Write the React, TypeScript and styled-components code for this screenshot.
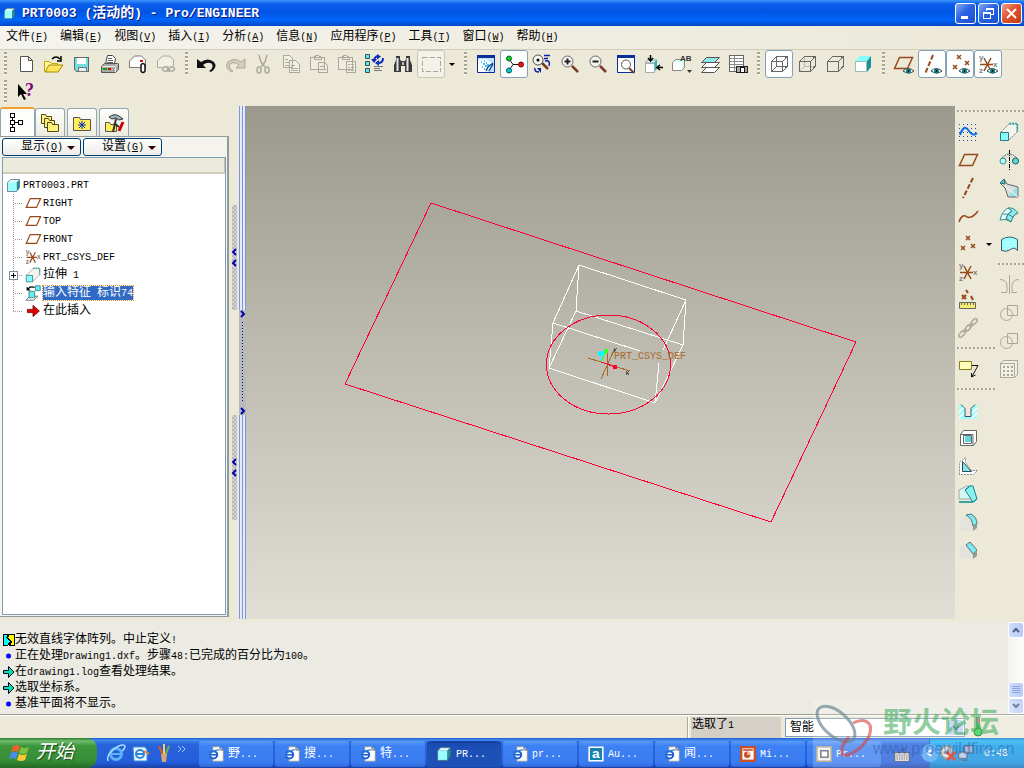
import React from 'react';
import styled, { createGlobalStyle, css } from 'styled-components';

const Global = createGlobalStyle`
  * { box-sizing: border-box; }
  body {
    margin: 0;
    background: #ece9d8;
    color: #000;
    font-family: 'Liberation Mono', 'Noto Sans CJK SC', monospace;
    font-size: 12px;
    line-height: 16px;
  }
  button, select { font: inherit; color: inherit; margin: 0; padding: 0; border: 0; background: none; }
  ul { list-style: none; margin: 0; padding: 0; }
`;

/* ---------- text ---------- */

const Latin = styled.span<{ $size: number }>`
  font-size: ${(p) => p.$size}px;
`;

/* Latin letters take half the width of a Han character. */
const Txt = ({ children, size = 10 }: { children: string; size?: number }) => (
  <>
    {children.split(/([\x20-\x7e]+)/).map((part, i) =>
      i % 2 ? <Latin key={i} $size={size}>{part}</Latin> : part,
    )}
  </>
);

/* ---------- icons ---------- */

const Svg = styled.svg<{ $w?: number; $h?: number; $smooth?: boolean }>`
  display: block;
  flex: none;
  width: ${(p) => p.$w ?? 20}px;
  height: ${(p) => p.$h ?? 20}px;
  overflow: visible;
  fill: none;
  stroke: none;
  shape-rendering: ${(p) => (p.$smooth ? 'auto' : 'crispEdges')};
`;
const Glyph = styled.text<{ $size: number; $serif?: boolean }>`
  font: bold ${(p) => p.$size}px ${(p) => (p.$serif ? "'Liberation Serif', serif" : "'Liberation Sans', sans-serif")};
`;

const BR = '#964a1c';
const GY = '#aca899';
const plane = 'M6.500 4.500h13l-5 11h-13z';
const star = (x: number, y: number) => `M${x} ${y}l4 4M${x + 4} ${y}l-4 4`;

const Eye = () => (
  <g>
    <path d="M9 17q5-5 11 0-5 4-11 0z" fill="#fff" stroke="#444" />
    <circle cx="14.500" cy="17" r="2.500" fill="#007c80" />
    <path d="M14 16h1v2h-1z" fill="#012" />
  </g>
);
const Cube = ({ hidden, inner }: { hidden?: boolean; inner?: string }) => (
  <g stroke="#666">
    {!hidden && <path d="M2.500 17.500l5-5h10M7.500 12V2.500" stroke={inner} />}
    <path d="M2.500 7.500h11v10h-11zM2.500 7.500l5-5h10.500l-4.500 5M18 2.500v10l-4.500 5" />
  </g>
);
const Lens = ({ sign }: { sign: string }) => (
  <g>
    <path d="M12 12l6 6" stroke="#7d3a24" strokeWidth="2.500" />
    <circle cx="7.500" cy="7.500" r="5.500" fill="#f4f3ee" stroke="#666" />
    <path d={sign} stroke="#222" strokeWidth="2" />
  </g>
);
const Csys = () => (
  <g>
    <path d="M2 10.500h13M6 4l7 13M13 4L6 17" stroke={BR} strokeWidth="1.500" />
    <Glyph $size={8} x="1" y="6" fill="#808080">y</Glyph>
    <Glyph $size={8} x="1" y="19" fill="#808080">z</Glyph>
    <Glyph $size={8} x="15" y="13" fill="#808080">x</Glyph>
  </g>
);
const SolidCube = () => (
  <g>
    <path d="M2 6l4-4h12l-4 4z" fill="#d8ffff" />
    <path d="M14 6l4-4v11l-4 5z" fill="#1f8f94" />
    <path d="M2 6h12v12H2z" fill="#9ff" />
    <path d="M2 6L6 2h12v11l-4 5H2z" stroke="#567" />
  </g>
);
const Page = () => (
  <g>
    <path d="M6 1h9l4 4v14H6z" fill="#fff" stroke="#999" />
    <path d="M15 1v4h4" stroke="#444" />
    <circle cx="7" cy="11" r="4.500" fill="#fff" stroke="#1e5fd0" strokeWidth="2.500" />
    <path d="M3 11h9" stroke="#1e5fd0" strokeWidth="2" />
    <path d="M1 16Q1 10 6 7t8-2" stroke="#2d7de0" strokeWidth="1.500" />
  </g>
);

const icons: Record<string, React.ReactNode> = {
  fresh: <path d="M4.500 2.500h8l4 4v11h-12z M12.500 2.500v4h4" fill="#fff" stroke="#555" />,
  open: (
    <g>
      <path d="M.5 17.500v-10h5l2 2h6v3" fill="#fff7a0" stroke="#c9a800" />
      <path d="M1 18l4-7h14l-5 7z" fill="#ffe45c" stroke="#a58a00" />
      <path d="M8 5q4-4 8 0M17 2v5h-4" stroke="#000" strokeWidth="1.500" />
    </g>
  ),
  save: (
    <g>
      <path d="M2.500 3.500h14v14h-12l-2-2z" fill="#6fdfe0" stroke="#666" />
      <path d="M5 4h9v6H5z" fill="#fff" />
      <path d="M6 13h8v4H6z" fill="#eee" stroke="#777" />
    </g>
  ),
  print: (
    <g>
      <path d="M5.500 10l2-8.500h5l3 3-1 6" fill="#fff" stroke="#444" />
      <path d="M8 4.500h4M8 6.500h5M7 8.500h6" stroke="#666" />
      <path d="M1.500 12.500l3-3h14v6l-3 3h-14z" fill="#a8a8a4" stroke="#555" />
      <path d="M2 12.500h13l3-3M15.500 13v5" stroke="#eee" />
      <path d="M3 14h4v2H3z" fill="#0a0" />
      <path d="M8 14h3v2H8z" fill="#d00" />
    </g>
  ),
  mail: (
    <g>
      <path d="M1.500 13.500V7l5-5h7l4 4v7.500z" fill="#fff" stroke="#777" />
      <path d="M12 6h3v2h-3z" fill="#e01000" />
      <path d="M13 16v-5q2-3 4 0v6q-2 3-4 0z" fill="#fff" stroke="#111" strokeWidth="1.500" />
    </g>
  ),
  mailOff: (
    <g stroke={GY}>
      <path d="M6 13.500H1.500V7l5-5h7l4 4v6" fill="#f2efe3" />
      <path d="M8 13h4q3 2 0 4H8q-3-2 0-4zM14 13h3q3 2 0 4h-4q-2-1-1-3" strokeWidth="1.500" />
    </g>
  ),
  undo: <path d="M0 5v9h9l-3-3q5-4 9-1 2 4-3 7l2 1q7-5 3-10-6-5-13 0z" fill="#111" />,
  redo: <path d="M20 5v9h-9l3-3q-5-4-9-1-2 4 3 7l-2 1q-7-5-3-10 6-5 13 0z" fill="#d3cfc0" stroke={GY} />,
  cut: (
    <g stroke={GY} strokeWidth="1.500">
      <path d="M6 1l2 7 4 5M14 1l-2 7-4 5" />
      <ellipse cx="6" cy="16" rx="2" ry="3" />
      <ellipse cx="14" cy="16" rx="2" ry="3" />
    </g>
  ),
  copy: <path d="M2.500 1.500h6l3 3v9h-9zM8.500 6.500h6l4 4v8h-10zM4 5h3M4 8h4M4 11h4M10 11h4M10 14h7M10 16h7" fill="#f2efe3" stroke={GY} />,
  paste: <path d="M1.500 3.500h14v12h-14zM5 3l3-2 4 2v2H5zM9.500 8.500h6l3 3v7h-9zM11 12h4M11 15h6" fill="#efecdf" stroke={GY} />,
  pasteSpecial: <path d="M1.500 3.500h14v12h-14zM5 3l3-2 4 2v2H5zM9.500 7.500h9v11h-9zM11 10h2M11 13h2M11 16h2M14 10h3M14 13h3M14 16h3" fill="#efecdf" stroke={GY} />,
  regen: (
    <g>
      <path d="M.5.500h4v4h-4zM.5 7.500h4v4h-4zM.5 14.500h4v4h-4z" fill="#5ee" stroke="#355" />
      <path d="M9 6q1-4 5-4M18 4q0 5-5 5" stroke="#0a2fb5" strokeWidth="2" />
      <path d="M12 0l4 2.500-4 3zM14 6l-4 3 4 3zM6 5h6l-3 4z" fill="#0a2fb5" />
      <path d="M9 12.500h9M9 14.500h6M9 16.500h8" stroke="#777" />
    </g>
  ),
  find: (
    <g>
      <path d="M3 2h4v3l1 2h4l1-2V2h4v4l2 5v7h-7v-6H8v6H1v-7l2-5z" fill="#3a3a3a" />
      <path d="M4.500 4v13M14.500 4v13" stroke="#e4e4e4" strokeWidth="2" />
      <path d="M9 8h2v3H9z" fill="#bbb" />
    </g>
  ),
  marquee: <path d="M1.500 3.500h18v14h-18z" stroke={GY} strokeDasharray="5 2" />,
  repaint: (
    <g>
      <path d="M1.500 1.500h17v17h-17z" fill="#bfe6fb" stroke="#0b2f9a" />
      <path d="M1 1h18v3H1z" fill="#0b2f9a" />
      <path d="M2 18V6l8-1 7 5-6 8z" fill="#fff" />
      <path d="M10 17l2-4 5-4M13 17l4-7" stroke="#134a8c" strokeWidth="1.500" />
      <path d="M5 8h1M8 7h1M7 10h2M10 9h1M9 12h2M6 13h1M11 11h2M8 15h1" stroke="#0af" strokeWidth="1.500" />
    </g>
  ),
  spin: (
    <g>
      <path d="M5 5l4 5.500h8M9 10.500l-4 6" stroke="#111" />
      <circle cx="5" cy="4.500" r="2.500" fill="#14c814" stroke="#063" />
      <circle cx="17" cy="10.500" r="2.500" fill="#e11" stroke="#700" />
      <circle cx="5" cy="16.500" r="2.500" fill="#0cc" stroke="#055" />
    </g>
  ),
  orient: (
    <g>
      <path d="M10 9l6 6" stroke="#7d3a24" strokeWidth="2.500" />
      <circle cx="6" cy="6" r="5" fill="#f4f3ee" stroke="#555" />
      <circle cx="6" cy="6" r="1.500" fill="#000" />
      <path d="M12 1.500h6M12 4.500h4M13 7q6-1 4 5M3 14q-1 4 4 4" stroke="#0a23a5" strokeWidth="1.500" />
      <path d="M5 14h4v5z" fill="#0a23a5" />
    </g>
  ),
  zoomIn: <Lens sign="M4.500 7.500h6M7.500 4.500v6" />,
  zoomOut: <Lens sign="M4.500 7.500h6" />,
  refit: (
    <g>
      <path d="M1.500 1.500h17v17h-17z" fill="#fff" stroke="#0b2f9a" />
      <path d="M1 1h18v3H1z" fill="#0b2f9a" />
      <path d="M13 14l5 5" stroke="#7d3a24" strokeWidth="2" />
      <circle cx="10" cy="10.500" r="4.500" fill="#fff" stroke="#555" />
    </g>
  ),
  reorient: (
    <g>
      <path d="M1 9l3-3h9l-3 3z" fill="#dff" stroke="#899" />
      <path d="M10 9l3-3v9l-3 3z" fill="#2bb" />
      <path d="M1.500 9.500h9v9h-9z" fill="#fff" stroke="#aaa" />
      <path d="M6.500 1v5M4 4l2.500 3L9 4M19 13.500h-6M16 11l-3 2.500 3 2.500" stroke="#000" strokeWidth="1.500" />
    </g>
  ),
  views: (
    <g>
      <path d="M.5 8.500l3-3h9v8l-3 3h-9z" fill="#cfe" stroke="#888" />
      <path d="M1 8h9v8H1z" fill="#fff" />
      <Glyph $size={8} x="8" y="7" fill="#333">AB</Glyph>
      <path d="M15 16h5l-2.500 3z" fill="#333" />
    </g>
  ),
  layers: (
    <g stroke="#555">
      <path d="M1.500 18.500l5-5h13l-5 5zM1.500 13.500l5-5h13l-5 5z" fill="#fff" />
      <path d="M1.500 8.500l5-5h13l-5 5z" fill="#8fe9ea" />
    </g>
  ),
  camera: (
    <g>
      <path d="M1.500 1.500h14v16h-14z" fill="#fff" stroke="#666" />
      <path d="M2 4.500h13M2 7.500h13M2 10.500h13M2 13.500h13M6.500 2v15" stroke="#888" />
      <path d="M8.500 12.500h11v6h-11z" fill="#aaa" stroke="#222" />
      <path d="M12 13h4v5h-4z" fill="#fff" stroke="#111" />
    </g>
  ),
  wire: <Cube />,
  hiddenLine: <Cube inner="#b8b8b8" />,
  noHidden: <Cube hidden />,
  shaded: (
    <g>
      <path d="M2 7l5-5h11l-4 5z" fill="#8ff" />
      <path d="M14 7l4-5v11l-4 5z" fill="#1c9096" />
      <path d="M2.500 7.500h11v10h-11z" fill="#fff" stroke="#9bb" />
    </g>
  ),
  planeEye: <g><path d="M5.500 3.500h13l-5 11h-13z" stroke={BR} strokeWidth="1.500" /><Eye /></g>,
  axisEye: <g><path d="M11 1L3 20" stroke={BR} strokeWidth="2" strokeDasharray="5 2" /><Eye /></g>,
  pointEye: <g><path d={star(7, 1) + star(3, 11) + star(15, 7)} stroke={BR} strokeWidth="1.500" /><Eye /></g>,
  csysEye: <g><Csys /><Eye /></g>,
  help: (
    <g>
      <path d="M2 2v13l3-3 3 6 2-1-3-5h4z" fill="#000" />
      <Glyph $size={18} $serif x="9" y="14" fill="#800080">?</Glyph>
    </g>
  ),
  sketch: (
    <g>
      <path d="M1 2.500h18M1 6.500h18M1 10.500h18M1 14.500h18M1 18.500h18" stroke="#224c9c" strokeDasharray="1 3" />
      <path d="M2 13q4-12 9-4 4 6 8 2" stroke="#0a6cf0" strokeWidth="2" />
    </g>
  ),
  plane: <path d={plane} stroke={BR} strokeWidth="1.500" />,
  axis: <path d="M15 0L5 20" stroke={BR} strokeWidth="2" strokeDasharray="5 2" />,
  curve: <path d="M1 16q3-9 8-5 5 2 11-6" stroke={BR} strokeWidth="1.500" />,
  points: <path d={star(8, 2) + star(3, 12) + star(13, 10)} stroke={BR} strokeWidth="1.500" />,
  csys: <Csys />,
  measure: (
    <g>
      <path d={star(4, 5) + 'M8 0l2 3M13 6l2 4'} stroke={BR} strokeWidth="2" />
      <path d="M1.500 12.500h16v6h-16z" fill="#f4ee70" stroke="#666" />
      <path d="M3 14h14" stroke="#666" strokeDasharray="1 2" strokeWidth="2" />
    </g>
  ),
  chain: (
    <g stroke={GY} strokeWidth="1.500">
      <ellipse cx="4" cy="16" rx="4" ry="2" transform="rotate(-48 4 16)" />
      <ellipse cx="10" cy="10" rx="4" ry="2" transform="rotate(-48 10 10)" />
      <ellipse cx="16" cy="4" rx="4" ry="2" transform="rotate(-48 16 4)" />
      <path d="M5 14l4-3M11 9l4-4" />
    </g>
  ),
  note: (
    <g>
      <path d="M1.500 2.500h12v8h-12z" fill="#ffb" stroke="#8c7d1c" />
      <path d="M14 6.500h6l-6 11M13.500 14v4l4-2" stroke="#111" />
    </g>
  ),
  hole: (
    <g>
      <path d="M1 5h3l3 3v9h6V8l3-3h3v14H1z" fill="#9ff" />
      <path d="M1 12l5-5M1 18l6-6M13 14l6-6M13 19l6-6" stroke="#fff" strokeWidth="1.500" />
      <path d="M3 4.500l4 4v8h6v-8l4-4" stroke="#456" />
    </g>
  ),
  shell: (
    <g>
      <path d="M2.500 6.500l3-4h13v11l-3 4h-13z" fill="#fff" stroke="#666" />
      <path d="M5.500 7.500h8v8h-8zM2 6.500h13v11" fill="#fff" stroke="#666" />
      <path d="M7 8h6v6H7z" fill="#5ed7dc" />
    </g>
  ),
  rib: (
    <g>
      <path d="M1.500 18.500v-12l6-5v5l6 8h6l-4 4z" fill="#fff" stroke="#888" strokeDasharray="2 1" />
      <path d="M4.500 5.500v10h9z" fill="#7fe6ea" stroke="#345" />
    </g>
  ),
  draft: (
    <g>
      <path d="M1 6l8-4h4v13H1z" fill="#d6f6f6" stroke="#9aa" />
      <path d="M7 6l5-4h3l4 13-4 3z" fill="#8feff0" stroke="#0a8a90" />
      <path d="M12 2l-5 4M15 18l4-3" stroke="#0a8a90" />
      <path d="M1 18h14" stroke="#0a8a90" strokeWidth="1.500" />
    </g>
  ),
  round: (
    <g>
      <path d="M2 7l6-4q11 1 11 11l-4 5H2z" fill="#e4e3de" />
      <path d="M8 3l5-1q6 3 6 10l-4 2q-1-8-7-11z" fill="#7fe9ef" stroke="#577" />
      <path d="M15 14v5l4-3v-4z" fill="#999" />
    </g>
  ),
  chamfer: (
    <g>
      <path d="M2 7l6-4 11 9v4l-4 3H2z" fill="#e4e3de" />
      <path d="M8 5l4-3 7 8-4 4z" fill="#7fe9ef" stroke="#577" />
      <path d="M15 14v5l4-3v-6z" fill="#999" />
    </g>
  ),
  extrude: (
    <g>
      <path d="M2 10l8-8h8v8l-8 8" stroke="#777" strokeDasharray="2 1" fill="#f4f3ee" />
      <path d="M10 1.500h8.500v8" stroke="#2aa" strokeWidth="1.500" strokeDasharray="2 1" />
      <path d="M1.500 10.500h8v8h-8z" fill="#8ff" stroke="#377" />
    </g>
  ),
  revolve: (
    <g>
      <path d="M3 8q7-8 15 0" stroke="#555" strokeDasharray="2 1" fill="#ddd" />
      <circle cx="4" cy="11" r="3" fill="#aff" stroke="#488" />
      <circle cx="16.500" cy="11" r="3" fill="#5dd" stroke="#355" />
      <path d="M10.500 0v20" stroke="#000" strokeDasharray="4 1 1 1" />
    </g>
  ),
  sweep: (
    <g>
      <path d="M1 5l4-4 3 5 11 3v10H9L6 10z" fill="#ddd" stroke="#666" />
      <path d="M1 5l4-4 1 5z" fill="#3dd" stroke="#366" />
      <path d="M9 18L18 9v9z" fill="#8fe6e8" />
      <path d="M6 8l13 11" stroke="#f8f8f8" />
    </g>
  ),
  boundary: (
    <g>
      <path d="M1 14q2-9 8-12l10 5q-5 2-7 9-5-4-11-2z" fill="#dff" stroke="#488" />
      <path d="M9 2q6-1 10 5-5 1-7 9-2-3-5-3 1-6 6-8z" fill="#8ee" stroke="#488" />
      <path d="M4 8q5-1 10 3M13 5q-5 2-6 9" stroke="#488" />
    </g>
  ),
  style: (
    <g>
      <path d="M2.500 5.500q8-5 16 0v11q-3-4-7-1-4 3-9 1z" fill="#9ff" stroke="#456" />
      <path d="M5 8.500h11M5 11.500h11M5 14.500h6" stroke="#effeff" strokeDasharray="1 1" />
    </g>
  ),
  mirror: <path d="M10.500 0v19M1 4.500q7 0 7 7v6H2M20 4.500q-7 0-7 7v6h5" stroke={GY} />,
  merge: <g stroke={GY}><path d="M8.500 2.500h10v10h-10z" /><circle cx="7.500" cy="11.500" r="6" /></g>,
  pattern: (
    <g stroke={GY}>
      <path d="M1.500 4.500l3-3h14v14l-3 3h-14zM2 4.500h13.500v14" fill="#f2efe3" />
      <path d="M4 8h10M4 12h10M4 16h10" strokeDasharray="2 2" strokeWidth="2" />
    </g>
  ),
  part: <SolidCube />,
  importFeature: (
    <g>
      <path d="M1 19l5-5h10l-5 5z" fill="#fff" stroke="#555" />
      <path d="M5 8h7v8H5z" fill="#6ee" stroke="#377" />
      <path d="M13 1h6v6h-6z" fill="#6ee" stroke="#377" />
      <path d="M4 5q2-4 8-2" stroke="#000" strokeWidth="1.500" />
      <path d="M2 2v5h5z" fill="#000" />
    </g>
  ),
  insertHere: <path d="M3 8h7V3l8 7-8 7v-5H3z" fill="#e00000" stroke="#700" />,
  tabTree: <path d="M2.500.500h4v4h-4zM2.500 7.500h4v4h-4zM2.500 14.500h4v4h-4zM10.500 7.500h4v4h-4zM4.500 5v3M4.500 12v3M7 9.500h4" stroke="#000" />,
  tabFolders: (
    <g fill="#fff27a" stroke="#4d4a20">
      <path d="M1.500 10.500v-9h4l1 2h5v7z" />
      <path d="M4.500 14.500v-9h4l1 2h5v7z" />
      <path d="M7.500 18.500v-9h4l1 2h6v7z" />
    </g>
  ),
  tabFavs: (
    <g>
      <path d="M1.500 17.500v-13h6l1 2h10v11z" fill="#ffee58" stroke="#555" />
      <path d="M10 8v8M6 12h8M7 9l6 6M13 9l-6 6" stroke="#0030c0" />
    </g>
  ),
  tabTools: (
    <g>
      <path d="M1.500 18.500v-9h4l1 2h6v7z" fill="#ffee58" stroke="#555" />
      <path d="M5 4q5-4 10-1l4 3-4 1-3-2-4 1z" fill="#9bb8c0" stroke="#333" />
      <path d="M12 6L9 19M10 10l5 4" stroke="#333" strokeWidth="2" />
      <path d="M19 9l-4 9" stroke="#c00" strokeWidth="3" />
    </g>
  ),
  page: <Page />,
  acad: (
    <g>
      <path d="M1.500 1.500h17v17h-17z" fill="#1683b0" stroke="#fff" strokeWidth="2" />
      <Glyph $size={17} x="5" y="15" fill="#fff">a</Glyph>
    </g>
  ),
  ppt: (
    <g>
      <path d="M0 0h20v20H0z" fill="#c85126" />
      <path d="M3 3h14v14H3z" fill="#fff" />
      <path d="M4 4h12v2H4z" fill="#c85126" />
      <circle cx="9" cy="11" r="4" fill="#c85126" />
      <path d="M9 11V7a4 4 0 0 1 4 4z" fill="#f4c0a0" />
    </g>
  ),
  window: (
    <g>
      <path d="M1 1h18v18H1z" fill="#f0f0e8" stroke="#a09a88" strokeWidth="2" />
      <path d="M6 6h9v8H6z" fill="#fff" stroke="#667" strokeWidth="2" />
    </g>
  ),
  ie: (
    <g>
      <circle cx="10" cy="11" r="5.500" stroke="#5ab4f5" strokeWidth="3" />
      <path d="M5 11h11" stroke="#5ab4f5" strokeWidth="2" />
      <path d="M2 18Q0 12 8 6t11-3q0 3-3 5" stroke="#a8dcff" strokeWidth="1.500" />
    </g>
  ),
  mailer: (
    <g>
      <path d="M3 4h12l2 3v11H4z" fill="#eef6ff" stroke="#3a8fd8" />
      <circle cx="10" cy="11" r="4" stroke="#2d87d8" strokeWidth="2" />
      <path d="M7 11h7" stroke="#2d87d8" strokeWidth="2" />
      <path d="M14 8l5 3" stroke="#e8842a" strokeWidth="2" />
    </g>
  ),
  brushes: (
    <g strokeWidth="2">
      <path d="M5 3l4 10" stroke="#e05a20" />
      <path d="M10 1v12" stroke="#f2cf60" />
      <path d="M15 3l-4 10" stroke="#7ab648" />
      <path d="M7 11h6l-1 8H8z" fill="#d9a577" />
    </g>
  ),
  keyboard: (
    <g>
      <path d="M10.500 6V2.500h4" stroke="#222" />
      <path d="M1 7h18v11H1z" fill="#e8e8e8" stroke="#333" />
      <path d="M3 10h14M3 12.500h14M3 15h14" stroke="#333" strokeDasharray="2 1" />
    </g>
  ),
  speakerOff: (
    <g>
      <circle cx="9" cy="9" r="7" fill="#ddd" stroke="#888" strokeWidth="2" />
      <path d="M5 8h3l4-3v9l-4-3H5z" fill="#888" />
      <path d="M9 9l9 9M18 9l-9 9" stroke="#e02a18" strokeWidth="3" />
    </g>
  ),
  network: (
    <g stroke="#445" fill="#8fa5d8">
      <path d="M8 2h10v8H8z" />
      <path d="M2 9h9v7H2zM5 18h7" fill="#b4c6ee" />
    </g>
  ),
  thermometer: (
    <g>
      <path d="M8.500.500h3v11h-3z" fill="#d9765c" stroke="#777" />
      <path d="M8 6h4v7H8z" fill="#1fb43a" />
      <circle cx="10" cy="15" r="4" fill="#2bd44c" stroke="#186a26" />
    </g>
  ),
};

/* Icons made of upright lines and dense small blocks are drawn without antialiasing. */
const crisp = new Set([
  'save', 'marquee', 'copy', 'paste', 'pasteSpecial', 'camera', 'wire', 'hiddenLine', 'noHidden', 'pattern', 'tabTree',
]);

const Icon = ({ name, size = 20 }: { name: string; size?: number }) => (
  <Svg $w={size} $h={size} $smooth={!crisp.has(name)} viewBox="0 0 20 20" aria-hidden="true">{icons[name]}</Svg>
);

/* ---------- window frame ---------- */

const Shell = styled.div`
  position: relative;
  display: flex;
  flex-direction: column;
  min-height: 100vh;
`;

const TitleBar = styled.header`
  display: flex;
  align-items: center;
  gap: 6px;
  height: 26px;
  padding: 0 2px 0 3px;
  background: linear-gradient(#3b93fb 0, #0b5eea 4px, #0055e5 12px, #0266fb 20px, #0048c4 26px);
`;
const Title = styled.h1`
  flex: 1;
  margin: 0;
  color: #fff;
  font-size: 14px;
  line-height: 20px;
  font-weight: bold;
  white-space: pre;
  text-shadow: 1px 1px 0 #0a1883;
`;
const Caption = styled.button<{ $close?: boolean }>`
  display: grid;
  place-items: center;
  width: 21px;
  height: 21px;
  margin-left: -4px;
  border: 1px solid #fff;
  border-radius: 3px;
  background: ${(p) =>
    p.$close
      ? 'linear-gradient(135deg, #f0a08a, #e2542e 45%, #c03a14)'
      : 'linear-gradient(135deg, #86a9f3, #2a63e2 45%, #1c50cf)'};
`;

const MenuBar = styled.nav`
  display: flex;
  gap: 12px;
  height: 24px;
  padding: 2px 6px 0;
  background: linear-gradient(90deg, #f4f3ee, #ece9d8);
  border-bottom: 1px solid #d0cdbd;
`;
const MenuButton = styled.button`
  height: 18px;
  line-height: 16px;
  white-space: nowrap;
`;
const Key = styled.u`
  font-size: 10px;
`;

const ToolBar = styled.div`
  display: flex;
  height: 28px;
  margin-left: -1px;
`;
const Grip = styled.span`
  flex: none;
  width: 13px;
  padding: 2px 5px;
  background: repeating-linear-gradient(#a9a595 0 2px, #f8f7f0 2px 3px, transparent 3px 4px) content-box;
`;
const Tool = styled.button<{ $on?: boolean; $off?: boolean }>`
  display: grid;
  place-items: center;
  flex: none;
  width: 28px;
  height: 28px;
  border: 1px solid transparent;
  border-radius: 3px;
  ${(p) => p.$on && css`background: #fdfefe; border-color: #86a0b8;`}
  ${(p) => p.$off && css`background: #f4f2e8; border-color: #c9c6b8;`}
`;
const Caret = styled.span`
  align-self: center;
  margin: 0 4px;
  border: 3px solid transparent;
  border-top-color: #000;
  border-bottom-width: 0;
`;

/* ---------- navigator ---------- */

const Main = styled.main`
  display: flex;
  flex: 1;
`;
const Navigator = styled.aside`
  display: flex;
  flex-direction: column;
  flex: none;
  width: 229px;
  padding: 1px 0 2px;
`;
const Tabs = styled.div`
  display: flex;
  align-items: flex-end;
  gap: 2px;
  height: 29px;
`;
const Tab = styled.button<{ $active?: boolean }>`
  display: grid;
  place-items: center;
  width: ${(p) => (p.$active ? 35 : 30)}px;
  height: ${(p) => (p.$active ? 29 : 28)}px;
  margin-right: ${(p) => (p.$active ? '-2px' : '0')};
  background: ${(p) => (p.$active ? '#fdfdfb' : 'linear-gradient(#fdfdfb, #eeece0)')};
  border: 1px solid #91a7b4;
  border-bottom: 0;
  border-top: ${(p) => (p.$active ? '2px solid #f0a030' : '1px solid #91a7b4')};
  border-radius: 3px 3px 0 0;
`;
const Panel = styled.div`
  display: flex;
  flex-direction: column;
  flex: 1;
  padding: 1px 1px 1px 2px;
  border: 1px solid #919b9c;
  border-left: 0;
  border-right-width: 2px;
  background: #f4f3ee;
`;
const PanelButtons = styled.div`
  display: flex;
  gap: 2px;
  height: 19px;
`;
const DropButton = styled.button`
  display: flex;
  align-items: center;
  justify-content: flex-end;
  gap: 2px;
  width: 79px;
  height: 18px;
  padding-right: 2px;
  border: 1px solid #003c74;
  border-radius: 3px;
  background: linear-gradient(#fff, #ecebe6);
  white-space: nowrap;
`;
const ButtonCaret = styled.span`
  margin: 1px 3px 0 2px;
  border: 4px solid transparent;
  border-top-color: #300;
  border-bottom-width: 0;
`;
const Tree = styled.div`
  flex: 1;
  border: 1px solid #7f9db9;
  background: #fff;
`;
const TreeHead = styled.div`
  height: 16px;
  margin-bottom: 2px;
  background: #ebeadb;
  border-bottom: 2px solid #d0cdbd;
  border-right: 1px solid #c7c5b2;
`;
const Node = styled.li`
  display: flex;
  align-items: center;
  height: 18px;
  padding-left: 3px;
  gap: 2px;
  white-space: pre;
`;
const dots = (dir: string) => `repeating-linear-gradient(${dir}, #999 0 1px, #fff 1px 2px)`;
const Branch = styled.span<{ $last?: boolean }>`
  display: flex;
  align-items: center;
  flex: none;
  width: 17px;
  height: 18px;
  padding-left: 3px;
  background-image: ${dots('180deg')}, ${dots('90deg')};
  background-repeat: no-repeat;
  background-position: 7px 0, 7px 9px;
  background-size: 1px ${(p) => (p.$last ? '9px' : '18px')}, 10px 1px;
`;
const Expander = styled.button`
  display: grid;
  place-items: center;
  width: 9px;
  height: 9px;
  border: 1px solid #7b8ca0;
  background: #fff;
`;
const Label = styled.span<{ $selected?: boolean }>`
  height: 14px;
  line-height: 14px;
  ${(p) => p.$selected && css`
    background: #316ac5;
    color: #fff;
    outline: 1px dotted #e0953a;
  `}
`;

/* ---------- sash ---------- */

const Sash = styled.div`
  display: flex;
  flex: none;
`;
const HatchColumn = styled.div`
  display: flex;
  flex-direction: column;
  justify-content: center;
  gap: 105px;
  width: 10px;
  padding: 0 2px 0 3px;
`;
const Hatch = styled.button`
  display: grid;
  place-content: center;
  gap: 3px;
  width: 5px;
  height: 105px;
  background: repeating-conic-gradient(#b4b4b4 0 25%, #d6d6d6 0 50%) 0 0 / 4px 4px;
`;
const RailColumn = styled.div`
  display: flex;
  flex-direction: column;
  width: 7px;
`;
const RailLines = styled.div`
  flex: 1;
  background: repeating-linear-gradient(90deg, #7b98dc 0 1px, #e6eaf4 1px 3px);
`;
const RailHandle = styled.button`
  display: flex;
  flex-direction: column;
  align-items: center;
  height: 105px;
  background: #b9b9b9;
`;
const RailDots = styled.span`
  flex: 1;
  width: 1px;
  margin: 4px 0;
  background: repeating-linear-gradient(#0000b0 0 1px, transparent 1px 3px);
`;

/* ---------- model view ---------- */

const View = styled.section`
  display: flex;
  flex: 1;
  min-width: 0;
  background: linear-gradient(#9b998d, #bfbdb2 50%, #e0ded5);
`;
const Scene = styled.svg`
  flex: 1;
  width: 100%;
  height: 100%;
  min-width: 0;
  fill: none;
  shape-rendering: crispEdges;
  font: 10px 'Liberation Mono', monospace;
`;

/* ---------- feature rails ---------- */

const Rails = styled.aside`
  display: flex;
  flex: none;
  gap: 3px;
  width: 69px;
  padding: 0 0 0 2px;
`;
const Rail = styled.div<{ $wide?: boolean }>`
  width: ${(p) => (p.$wide ? 38 : 26)}px;
`;
const RailRow = styled.div`
  display: flex;
  margin-left: -3px;
`;
const RailGrip = styled.div<{ $top?: boolean }>`
  height: ${(p) => (p.$top ? 12 : 13)}px;
  padding: ${(p) => (p.$top ? '4px 0 6px' : '5px 0 6px')};
  background: repeating-linear-gradient(90deg, #a9a595 0 2px, #f8f7f0 2px 3px, transparent 3px 4px) content-box;
`;

/* ---------- messages and status ---------- */

const Messages = styled.section`
  display: flex;
  margin-top: 3px;
  background: #ebeae3;
  border-bottom: 1px solid #9c9a8c;
`;
const Log = styled.ul`
  flex: 1;
  padding: 10px 0 2px 3px;
`;
const LogLine = styled.li`
  display: flex;
  align-items: center;
  height: 16px;
  white-space: nowrap;
`;
const Scroll = styled.div`
  display: flex;
  flex-direction: column;
  width: 16px;
  background: linear-gradient(90deg, #f3f1ec, #fefefb);
`;
const ScrollButton = styled.button`
  display: grid;
  place-items: center;
  height: 16px;
  border: 1px solid #fff;
  border-radius: 3px;
  background: linear-gradient(90deg, #cfddfd, #b8cbf6);
`;
const ScrollTrack = styled.div`
  display: flex;
  flex-direction: column;
  justify-content: flex-end;
  flex: 1;
`;
const Status = styled.footer`
  display: flex;
  justify-content: flex-end;
  height: 23px;
  padding: 1px 36px 0 0;
  border-top: 1px solid #fff;
`;
const Picked = styled.div`
  width: 90px;
  margin: 0 4px 0 2px;
  padding-left: 1px;
  background: #d4d0c8;
`;
const Split = styled.span`
  width: 2px;
  background: #fff;
  border-left: 1px solid #aca899;
`;
const Filter = styled.label`
  display: flex;
  align-items: center;
  width: 180px;
  height: 19px;
  margin: 1px 3px 0 0;
  padding-right: 1px;
  border: 1px solid #7f9db9;
  background: #fff;
  select { flex: 1; height: 17px; padding-left: 4px; appearance: none; outline: 0; }
`;
const FilterArrow = styled.span`
  display: grid;
  place-items: center;
  width: 15px;
  height: 15px;
  border-radius: 2px;
  background: #c3d3fb;
`;

/* ---------- taskbar ---------- */

const TaskBar = styled.nav`
  display: flex;
  height: 30px;
  color: #fff;
  background: linear-gradient(#1f54c8 0, #3f8cf0 2px, #2864dc 6px, #245ddb 24px, #1941a5 30px);
`;
const Start = styled.button`
  display: flex;
  align-items: center;
  gap: 6px;
  flex: none;
  width: 97px;
  padding: 0 0 0 10px;
  border-radius: 0 10px 10px 0;
  background: linear-gradient(#2c7a2c 0, #6fbd6f 3px, #3c963c 8px, #378f37 22px, #236b23 30px);
  font-size: 19px;
  font-style: italic;
  line-height: 26px;
  text-shadow: 1px 1px 1px #1a4a1a;
`;
const Quick = styled.div`
  display: flex;
  align-items: center;
  flex: none;
  gap: 4px;
  width: 102px;
  padding-left: 9px;
  button { width: 20px; height: 20px; }
`;
const Task = styled.button<{ $active?: boolean }>`
  display: flex;
  align-items: center;
  gap: 3px;
  flex: 0 1 74px;
  height: 26px;
  margin: 3px 2px 0 0;
  padding-left: 9px;
  border-radius: 3px;
  white-space: nowrap;
  background: ${(p) =>
    p.$active ? 'linear-gradient(#153f9c, #1b4fb6 5px, #1e52b7)' : 'linear-gradient(#5b9bfb, #3c81f3 5px, #3a7bf0 22px, #2f66d8)'};
`;
const TaskText = styled.span`
  padding-left: 1px;
`;
const Input = styled.div`
  display: grid;
  place-items: center;
  flex: 1;
  padding: 4px 8px 0 0;
`;
const Tray = styled.div`
  display: flex;
  align-items: center;
  flex: none;
  width: 95px;
  height: 30px;
  border-left: 1px solid #0e5fc0;
  background: linear-gradient(#0f74d4 0, #22b4f6 3px, #139ae8 8px, #1290e0 24px, #0c6cb8 30px);
`;
const Hide = styled.button`
  display: grid;
  place-items: center;
  width: 18px;
  height: 18px;
  margin-left: -9px;
  border-radius: 9px;
  background: #4aa4f4;
`;
const Clock = styled.time`
  padding-left: 9px;
`;

/* ---------- site stamp over the corner ---------- */

const Stamp = styled.div`
  position: absolute;
  right: 0;
  bottom: 0;
  display: flex;
  width: 211px;
  height: 67px;
  pointer-events: none;
  background: rgba(255, 255, 255, 0.2);
`;
const StampText = styled.div`
  flex: 1;
  white-space: nowrap;
`;
const StampName = styled.div`
  margin: 2px 0 0 10px;
  color: rgba(70, 175, 100, 0.6);
  font: bold 29px/34px 'Noto Sans CJK SC', sans-serif;
`;
const StampUrl = styled.div`
  color: rgba(40, 90, 170, 0.5);
  font: 16px/24px 'Liberation Sans', sans-serif;
`;

/* ---------- data ---------- */

const menus: [string, string][] = [
  ['文件', 'F'], ['编辑', 'E'], ['视图', 'V'], ['插入', 'I'], ['分析', 'A'], ['信息', 'N'],
  ['应用程序', 'P'], ['工具', 'T'], ['窗口', 'W'], ['帮助', 'H'],
];
const fileTools = ['fresh', 'open', 'save', 'print', 'mail', 'mailOff'];
const editTools = ['undo', 'redo', 'cut', 'copy', 'paste', 'pasteSpecial', 'regen', 'find'];
const viewTools = ['repaint', 'spin', 'orient', 'zoomIn', 'zoomOut', 'refit', 'reorient', 'views', 'layers', 'camera'];
const displayTools = ['wire', 'hiddenLine', 'noHidden', 'shaded'];
const datumTools = ['planeEye', 'axisEye', 'pointEye', 'csysEye'];
const pressed = new Set(['spin', 'wire', 'axisEye', 'pointEye', 'csysEye']);

const nodes = [
  { icon: 'plane', text: 'RIGHT' },
  { icon: 'plane', text: 'TOP' },
  { icon: 'plane', text: 'FRONT' },
  { icon: 'csys', text: 'PRT_CSYS_DEF' },
  { icon: 'extrude', text: '拉伸 1', expandable: true },
  { icon: 'importFeature', text: '输入特征 标识74', selected: true },
  { icon: 'insertHere', text: '在此插入' },
];

const log = [
  { kind: 'warn', text: '无效直线字体阵列。中止定义!' },
  { kind: 'dot', text: '正在处理Drawing1.dxf。步骤48:已完成的百分比为100。' },
  { kind: 'arrow', text: '在drawing1.log查看处理结果。' },
  { kind: 'arrow', text: '选取坐标系。' },
  { kind: 'dot', text: '基准平面将不显示。' },
];

const tasks = [
  { icon: 'page', text: '野...' },
  { icon: 'page', text: '搜...' },
  { icon: 'page', text: '特...' },
  { icon: 'part', text: 'PR...', active: true },
  { icon: 'page', text: 'pr...' },
  { icon: 'acad', text: 'Au...' },
  { icon: 'page', text: '闻...' },
  { icon: 'ppt', text: 'Mi...' },
  { icon: 'window', text: 'Pr...' },
];

/* ---------- parts ---------- */

const Tools = ({ names }: { names: string[] }) => (
  <>
    {names.map((n) => (
      <Tool key={n} $on={pressed.has(n)} aria-label={n}><Icon name={n} /></Tool>
    ))}
  </>
);

const Chevron = ({ d, w = 8, h = 8, color = '#4d6185' }: { d: string; w?: number; h?: number; color?: string }) => (
  <Svg $w={w} $h={h} $smooth viewBox={`0 0 ${w} ${h}`} aria-hidden="true">
    <path d={d} stroke={color} strokeWidth="2" />
  </Svg>
);
const LeftMark = () => <Chevron w={5} h={8} d="M4 1L1 4l3 3" color="#0000b0" />;
const RightMark = () => <Chevron w={5} h={8} d="M1 1l3 3-3 3" color="#0000b0" />;

const Shortcut = ({ name, letter }: { name: string; letter: string }) => (
  <span>{name}<Latin $size={10}>(</Latin><Key>{letter}</Key><Latin $size={10}>)</Latin></span>
);

const Mark = ({ kind }: { kind: string }) => (
  <Svg $w={12} $h={12} $smooth={kind !== 'warn'} viewBox="0 0 12 12" aria-hidden="true">
    {kind === 'dot' && <circle cx="5.500" cy="6" r="2.500" fill="#0000ff" />}
    {kind === 'arrow' && <path d="M.5 4.500h5v-4l5.500 5.500-5.500 5.500v-4h-5z" fill="#00e5b0" stroke="#003" />}
    {kind === 'warn' && (
      <g>
        <path d="M.5.500h5l-2 3 4 4-3 4h-4z" fill="#0ff" stroke="#000" />
        <path d="M6.500.500h5v11h-5l2-4-4-4z" fill="#ff0" stroke="#000" />
      </g>
    )}
  </Svg>
);

const Model = () => (
  <Scene viewBox="246 106 709 513" role="img" aria-label="PRT0003">
    <path
      d="M579 265L686 300L683 345L576 311zM579 265L553 323L549 368L576 311M549 368L655 403L683 345M686 300L663 350M655 403L659 363M553 323L640 351"
      stroke="#fff"
    />
    <path d="M431 203L856 342L771 522L345 384z" stroke="#ff0033" />
    <ellipse cx="608.500" cy="364.500" rx="62" ry="49.500" stroke="#ff0033" />
    <path d="M588 358L630 371M608 350L607 377M615 348L601 379" stroke="#a8692c" />
    <path d="M601 362L615 367" stroke="#ff0033" />
    <path d="M601 362V354" stroke="#00ffff" />
    <path d="M601 362L606 352" stroke="#33ff33" />
    <circle cx="615" cy="367" r="2.500" fill="#ff0033" />
    <circle cx="606" cy="351" r="2.500" fill="#33ff33" />
    <circle cx="601" cy="353.500" r="3" fill="#00ffff" />
    <path d="M614 348l2 3M617 348l-3 4M626 371l3 4M629 371l-3 4" stroke="#555" />
    <text x="614" y="359" fill="#a8692c">PRT_CSYS_DEF</text>
  </Scene>
);

export default function App() {
  return (
    <Shell>
      <Global />
      <TitleBar>
        <Icon name="part" size={13} />
        <Title><Txt size={13}>PRT0003 (活动的) - Pro/ENGINEER</Txt></Title>
        <Caption aria-label="最小化">
          <Svg $w={13} $h={13} viewBox="0 0 13 13"><path d="M2 9h7v3H2z" fill="#fff" /></Svg>
        </Caption>
        <Caption aria-label="还原">
          <Svg $w={13} $h={13} viewBox="0 0 13 13"><path d="M4.500 4V1.500h7v6H9M4 2h8M1.500 5.500h7v6h-7zM1 6h8" stroke="#fff" /></Svg>
        </Caption>
        <Caption $close aria-label="关闭">
          <Svg $w={13} $h={13} viewBox="0 0 13 13" $smooth><path d="M2 2l9 9M11 2l-9 9" stroke="#fff" strokeWidth="2" /></Svg>
        </Caption>
      </TitleBar>

      <MenuBar>
        {menus.map(([name, key]) => (
          <MenuButton key={key}><Shortcut name={name} letter={key} /></MenuButton>
        ))}
      </MenuBar>

      <ToolBar role="toolbar">
        <Grip /><Tools names={fileTools} />
        <Grip /><Tools names={editTools} />
        <Tool $off aria-label="选取"><Icon name="marquee" /></Tool><Caret />
        <Grip /><Tools names={viewTools} />
        <Grip /><Tools names={displayTools} />
        <Grip /><Tools names={datumTools} />
      </ToolBar>
      <ToolBar role="toolbar">
        <Grip /><Tools names={['help']} />
      </ToolBar>

      <Main>
        <Navigator>
          <Tabs>
            <Tab $active aria-label="模型树"><Icon name="tabTree" /></Tab>
            <Tab aria-label="文件夹"><Icon name="tabFolders" /></Tab>
            <Tab aria-label="收藏夹"><Icon name="tabFavs" /></Tab>
            <Tab aria-label="工具"><Icon name="tabTools" /></Tab>
          </Tabs>
          <Panel>
            <PanelButtons>
              <DropButton><Shortcut name="显示" letter="O" /><ButtonCaret /></DropButton>
              <DropButton><Shortcut name="设置" letter="G" /><ButtonCaret /></DropButton>
            </PanelButtons>
            <Tree>
              <TreeHead />
              <ul>
                <Node><Icon name="part" size={15} /><Label><Txt>PRT0003.PRT</Txt></Label></Node>
                {nodes.map((n, i) => (
                  <Node key={n.text}>
                    <Branch $last={i === nodes.length - 1}>
                      {n.expandable && (
                        <Expander aria-label="展开">
                          <Svg $w={5} $h={5} viewBox="0 0 5 5"><path d="M0 2h5v1H0zM2 0h1v5H2z" fill="#000" /></Svg>
                        </Expander>
                      )}
                    </Branch>
                    <Icon name={n.icon} size={16} />
                    <Label $selected={n.selected}><Txt>{n.text}</Txt></Label>
                  </Node>
                ))}
              </ul>
            </Tree>
          </Panel>
        </Navigator>

        <Sash>
          <HatchColumn>
            <Hatch aria-label="收起导航器"><LeftMark /><LeftMark /></Hatch>
            <Hatch aria-label="收起"><LeftMark /><LeftMark /></Hatch>
          </HatchColumn>
          <RailColumn>
            <RailLines />
            <RailHandle aria-label="展开浏览器"><RightMark /><RailDots /><RightMark /></RailHandle>
            <RailLines />
          </RailColumn>
        </Sash>

        <View><Model /></View>

        <Rails>
          <Rail $wide>
            <RailGrip $top />
            {['sketch', 'plane', 'axis', 'curve', 'points', 'csys', 'measure', 'chain'].map((n) => (
              <RailRow key={n}>
                <Tools names={[n]} />
                {n === 'points' && <Caret />}
              </RailRow>
            ))}
            <RailGrip />
            <RailRow><Tools names={['note']} /></RailRow>
            <RailGrip />
            {['hole', 'shell', 'rib', 'draft', 'round', 'chamfer'].map((n) => (
              <RailRow key={n}><Tools names={[n]} /></RailRow>
            ))}
          </Rail>
          <Rail>
            <RailGrip $top />
            {['extrude', 'revolve', 'sweep', 'boundary', 'style'].map((n) => (
              <RailRow key={n}><Tools names={[n]} /></RailRow>
            ))}
            <RailGrip />
            {['mirror', 'merge', 'merge', 'pattern'].map((n, i) => (
              <RailRow key={i}><Tools names={[n]} /></RailRow>
            ))}
          </Rail>
        </Rails>
      </Main>

      <Messages>
        <Log>
          {log.map((l) => (
            <LogLine key={l.text}><Mark kind={l.kind} /><span><Txt>{l.text}</Txt></span></LogLine>
          ))}
        </Log>
        <Scroll>
          <ScrollButton aria-label="向上"><Chevron d="M1 6l3-3 3 3" /></ScrollButton>
          <ScrollTrack>
            <ScrollButton aria-label="滑块">
              <Svg $w={8} $h={8} viewBox="0 0 8 8"><path d="M0 .5h8M0 2.500h8M0 4.500h8M0 6.500h8" stroke="#8ca5dd" /></Svg>
            </ScrollButton>
          </ScrollTrack>
          <ScrollButton aria-label="向下"><Chevron d="M1 2l3 3 3-3" /></ScrollButton>
        </Scroll>
      </Messages>

      <Status>
        <Split />
        <Picked><Txt>选取了1</Txt></Picked>
        <Filter>
          <select aria-label="过滤器" defaultValue="smart"><option value="smart">智能</option></select>
          <FilterArrow><Chevron d="M1 2l3 3 3-3" /></FilterArrow>
        </Filter>
        <Icon name="thermometer" />
      </Status>

      <TaskBar>
        <Start>
          <Svg $smooth viewBox="0 0 20 20" aria-hidden="true">
            <path d="M3 3q4-2 7 0L8 9Q5 7 1 9z" fill="#f0622c" />
            <path d="M11 4q4 2 8 0l-2 6q-4 2-8 0z" fill="#7cc142" />
            <path d="M1 10q4-2 7 0l-2 6q-3-2-7 0z" fill="#4a8cf0" />
            <path d="M9 11q4 2 8 0l-2 6q-4 2-8 0z" fill="#fbca32" />
          </Svg>
          开始
        </Start>
        <Quick>
          <button aria-label="浏览器"><Icon name="ie" /></button>
          <button aria-label="邮件"><Icon name="mailer" /></button>
          <button aria-label="画图"><Icon name="brushes" /></button>
          <Svg $w={8} $h={16} viewBox="0 0 8 16" $smooth aria-hidden="true"><path d="M0 1l3 3-3 3M4 1l3 3-3 3" stroke="#a8ccff" /></Svg>
        </Quick>
        {tasks.map((t, i) => (
          <Task key={i} $active={t.active}>
            <Icon name={t.icon} size={16} />
            <TaskText><Txt>{t.text}</Txt></TaskText>
          </Task>
        ))}
        <Input><Icon name="keyboard" size={16} /></Input>
        <Tray>
          <Hide aria-label="隐藏"><Chevron d="M5 1L2 4l3 3" color="#fff" /></Hide>
          <Icon name="speakerOff" size={18} />
          <Icon name="network" size={18} />
          <Clock><Txt>0:48</Txt></Clock>
        </Tray>
      </TaskBar>

      <Stamp>
        <Svg $w={60} $h={60} $smooth viewBox="0 0 60 60" aria-hidden="true">
          <ellipse cx="23" cy="23" rx="23" ry="12" transform="rotate(42 23 23)" stroke="#6f8794" strokeOpacity=".7" strokeWidth="3" />
          <path d="M40 22q12-6 17 2 3 10-9 22-12 10-18 8-4-8 6-18" stroke="#d8403c" strokeOpacity=".6" strokeWidth="3" />
        </Svg>
        <StampText>
          <StampName>野火论坛</StampName>
          <StampUrl>www.proewildfire.cn</StampUrl>
        </StampText>
      </Stamp>
    </Shell>
  );
}
